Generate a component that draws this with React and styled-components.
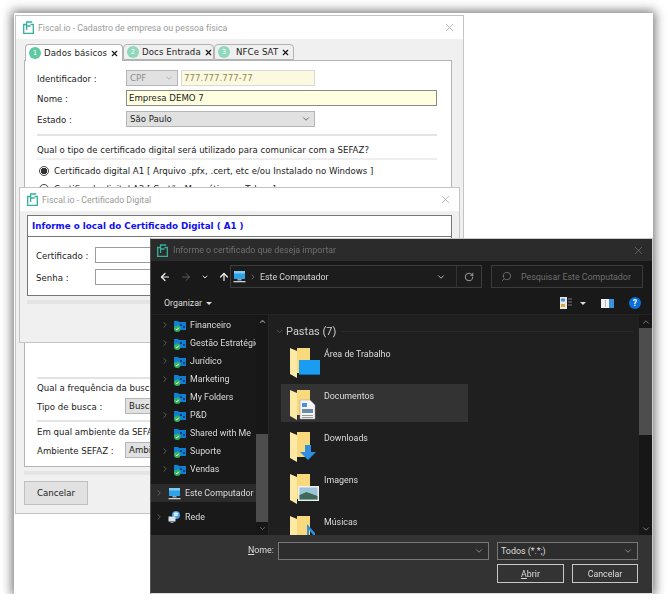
import React from "react"
import styled, { createGlobalStyle } from "styled-components"
import {
  ArrowLeft,
  ArrowRight,
  ArrowUp,
  ChevronDown,
  ChevronRight,
  ChevronUp,
  RotateCw,
  Search,
  X,
} from "lucide-react"

const GlobalStyle = createGlobalStyle`
  html, body {
    margin: 0;
    background: #fff;
  }
  * {
    box-sizing: border-box;
  }
`

const Stage = styled.div`
  position: relative;
  width: 639px;
  height: 581px;
  margin: 13px 0 0 14px;
  background: #fff;
  box-shadow: 0 0 10px 2px rgba(0, 0, 0, 0.55);
  filter: blur(0.3px);
`

/* ---- light windows ---- */

const LightWindow = styled.section`
  position: absolute;
  left: ${p => p.$left}px;
  top: ${p => p.$top}px;
  width: ${p => p.$width}px;
  height: ${p => p.$height}px;
  display: flex;
  flex-direction: column;
  background: #f0f0f0;
  border: 1px solid #c4c4c4;
  font-family: "DejaVu Sans", Verdana, sans-serif;
  font-size: 8.6px;
  color: #222;
`

const TitleBar = styled.header`
  flex: none;
  height: ${p => p.$height}px;
  display: flex;
  align-items: center;
  gap: 4px;
  padding: 0 7px;
  background: #fff;
  color: #9a9a9a;
  font-family: Roboto, sans-serif;
  font-size: 8.8px;
`

const TitleText = styled.span`
  flex: 1;
`

const TabRow = styled.div`
  flex: none;
  display: flex;
  align-items: flex-end;
  height: 20px;
  margin-top: 1px;
  padding-left: 9px;
`

const Tab = styled.div`
  width: ${p => p.$width}px;
  height: ${p => (p.$active ? 17 : 16)}px;
  display: flex;
  align-items: center;
  gap: 3px;
  padding: 0 3px;
  background: ${p => (p.$active ? "#fff" : "#efefef")};
  border: 1px solid #b3b3b3;
  border-bottom: ${p => (p.$active ? "none" : "1px solid #b3b3b3")};
  border-radius: 4px 4px 0 0;
  margin-bottom: ${p => (p.$active ? "-1px" : "0")};
  z-index: ${p => (p.$active ? 1 : 0)};
  letter-spacing: 0.1px;
`

const TabNumber = styled.span`
  flex: none;
  width: 12px;
  height: 12px;
  border-radius: 50%;
  background: ${p => (p.$active ? "#5ec8a0" : "#8ed8bb")};
  color: #fff;
  font-size: 7px;
  line-height: 12px;
  text-align: center;
`

const TabLabel = styled.span`
  flex: 1;
  white-space: nowrap;
  padding-left: ${p => p.$pad ?? 0}px;
`

const TabClose = styled(X)`
  flex: none;
  margin-right: 1px;
  color: #111;
`

const Panel = styled.div`
  flex: none;
  margin: 0 11px 0 8px;
  height: 407px;
  padding: 9px 14px 0 12px;
  display: flex;
  flex-direction: column;
  background: #fff;
  border: 1px solid #b3b3b3;
`

const FormRow = styled.div`
  display: flex;
  align-items: center;
  height: 16px;
  margin-bottom: ${p => p.$gap ?? 4}px;
  gap: 3px;
`

const FieldLabel = styled.label`
  flex: none;
  width: ${p => p.$width ?? 86}px;
  padding-top: 1px;
  white-space: nowrap;
`

const Select = styled.div`
  flex: none;
  width: ${p => p.$width}px;
  height: 16px;
  display: flex;
  align-items: center;
  justify-content: space-between;
  padding: 0 3px;
  background: #e1e1e1;
  border: 1px solid #b5b5b5;
  color: ${p => (p.$muted ? "#8c8c8c" : "#222")};
  white-space: nowrap;
  overflow: hidden;
`

const TextBox = styled.div`
  flex: none;
  width: ${p => p.$width}px;
  height: 16px;
  display: flex;
  align-items: center;
  padding: 0 2px;
  background: ${p => (p.$muted ? "#fbf9df" : "#ffffe0")};
  border: 1px solid ${p => (p.$muted ? "#d8d8d8" : "#8a8a8a")};
  color: ${p => (p.$muted ? "#948a55" : "#222")};
`

const Divider = styled.hr`
  flex: none;
  width: 100%;
  height: 2px;
  margin: ${p => p.$top ?? 0}px 0 ${p => p.$bottom ?? 0}px;
  border: none;
  background: ${p => p.$color ?? "#e3e3e3"};
`

const Line = styled.p`
  margin: 0;
  height: 12px;
  line-height: 13px;
  white-space: nowrap;
`

const RadioRow = styled.div`
  display: flex;
  align-items: center;
  gap: 5px;
  height: 12px;
  margin: 0 0 6px 2px;
  white-space: nowrap;
`

const Radio = styled.span`
  flex: none;
  width: 10px;
  height: 10px;
  border-radius: 50%;
  border: 1px solid #444;
  background: ${p => (p.$on ? "radial-gradient(circle, #333 0 3px, #fff 3.5px)" : "#fff")};
`

const Gap = styled.div`
  flex: none;
  height: ${p => p.$height}px;
`

const Strip = styled.div`
  flex: none;
  height: 4px;
  margin: ${p => p.$margin};
  background: #e4e4e4;
`

const CancelButton = styled.button`
  align-self: flex-start;
  width: 64px;
  height: 24px;
  margin: 6px 0 0 8px;
  padding: 0;
  background: #e1e1e1;
  border: 1px solid #c0c0c0;
  color: #222;
  font: inherit;
`

const CertBox = styled.div`
  height: 81px;
  margin: 4px 7px 0 7px;
  background: #fff;
  border: 1px solid #777;
`

const CertHeading = styled.h2`
  margin: 0;
  height: 21px;
  padding-left: 4px;
  line-height: 20px;
  border-bottom: 1px solid #777;
  color: #1010ee;
  font-size: 8.75px;
  font-weight: 700;
`

const CertFields = styled.div`
  display: flex;
  flex-direction: column;
  gap: 6px;
  padding: 10px 0 0 8px;
`

const CertRow = styled.div`
  display: flex;
  align-items: center;
`

const CertInput = styled.div`
  width: 300px;
  height: 16px;
  background: #fff;
  border: 1px solid #9c9c9c;
`

/* ---- dark file dialog ---- */

const DarkWindow = styled.section`
  position: absolute;
  left: 136px;
  top: 225px;
  width: 503px;
  height: 356px;
  display: flex;
  flex-direction: column;
  background: #1f1f1f;
  border: 1px solid #c9c9c9;
  border-left-color: #555;
  border-bottom-color: #ddd;
  font-family: Roboto, sans-serif;
  font-size: 8.85px;
  color: #dcdcdc;
`

const DarkTitle = styled.header`
  flex: none;
  height: 22px;
  display: flex;
  align-items: center;
  gap: 5px;
  padding: 0 7px 0 6px;
  background: #2b2b2b;
  color: #6f6f6f;
`

const NavBar = styled.div`
  flex: none;
  height: 31px;
  display: flex;
  align-items: center;
  padding: 0 10px 0 4px;
  background: #191919;
`

const NavButtons = styled.div`
  flex: none;
  width: 75px;
  display: flex;
  align-items: center;
  gap: 9px;
  padding-left: 4px;
`

const AddressBox = styled.div`
  flex: none;
  width: 252px;
  height: 23px;
  display: flex;
  align-items: center;
  gap: 3px;
  padding: 0 0 0 2px;
  background: #1c1c1c;
  border: 1px solid #3c3c3c;
  svg {
    flex: none;
  }
`

const AddressText = styled.span`
  flex: 1;
  color: #d4d4d4;
`

const AddressAction = styled.span`
  flex: none;
  display: flex;
  align-items: center;
  justify-content: center;
  width: 25px;
  height: 100%;
  border-left: ${p => (p.$divided ? "1px solid #333" : "none")};
  color: #b4b4b4;
`

const SearchBox = styled.div`
  flex: none;
  width: 152px;
  height: 23px;
  margin-left: 9px;
  display: flex;
  align-items: center;
  gap: 9px;
  padding-left: 9px;
  background: #1c1c1c;
  border: 1px solid #3c3c3c;
  color: #6e6e6e;
  white-space: nowrap;
`

const SearchIcon = styled(Search)`
  flex: none;
  transform: scaleX(-1);
`

const Toolbar = styled.div`
  flex: none;
  height: 23px;
  display: flex;
  align-items: center;
  padding: 0 11px 0 13px;
  background: #191919;
  border-bottom: 1px solid #232323;
`

const ToolbarLabel = styled.span`
  flex: 1;
  display: flex;
  align-items: center;
  gap: 4px;
`

const Caret = styled.span`
  width: 0;
  height: 0;
  border: 3px solid transparent;
  border-top: 3px solid #ddd;
  border-bottom: none;
`

const ToolIcons = styled.span`
  display: flex;
  align-items: center;
  gap: ${p => p.$gap}px;
`

const HelpIcon = styled.span`
  width: 12px;
  height: 12px;
  border-radius: 50%;
  background: #0a6fd8;
  color: #fff;
  font-size: 9px;
  font-weight: 700;
  line-height: 12px;
  text-align: center;
`

const Browser = styled.div`
  flex: 1;
  min-height: 0;
  display: flex;
`

const Sidebar = styled.nav`
  flex: none;
  width: 118px;
  display: flex;
  background: #191919;
  border-right: 1px solid #262626;
`

const TreeList = styled.ul`
  flex: 1;
  min-width: 0;
  margin: 0;
  padding: 1px 0 0;
  list-style: none;
  overflow: hidden;
`

const TreeItem = styled.li`
  height: 18px;
  display: flex;
  align-items: center;
  gap: 4px;
  padding-left: ${p => p.$indent}px;
  margin-top: ${p => p.$top ?? 0}px;
  background: ${p => (p.$selected ? "#2b2b2b" : "transparent")};
  white-space: nowrap;
  svg {
    flex: none;
  }
`

const TreeArrow = styled(ChevronRight)`
  color: #666;
  visibility: ${p => (p.$hidden ? "hidden" : "visible")};
`

const ScrollBar = styled.div`
  flex: none;
  width: ${p => p.$width}px;
  display: flex;
  flex-direction: column;
  align-items: center;
  background: #171717;
  color: #7a7a7a;
`

const ScrollStep = styled.span`
  flex: none;
  height: 13px;
  display: flex;
  align-items: center;
`

const ScrollTrack = styled.div`
  flex: 1;
  width: 100%;
  min-height: 0;
  display: flex;
  flex-direction: column;
  justify-content: ${p => p.$align};
`

const ScrollThumb = styled.div`
  height: ${p => p.$height}px;
  background: #4d4d4d;
`

const Content = styled.main`
  flex: 1;
  min-width: 0;
  padding: 6px 0 0 6px;
  overflow: hidden;
`

const GroupHeader = styled.div`
  display: flex;
  align-items: center;
  height: 20px;
  gap: 2px;
  padding-right: 6px;
  color: #cfcfcf;
  font-size: 11px;
`

const GroupLine = styled.span`
  flex: 1;
  height: 1px;
  margin-left: 4px;
  background: #2b2b2b;
`

const FolderRow = styled.div`
  width: 187px;
  height: 38px;
  margin: 0 0 4px 6px;
  display: flex;
  gap: 3px;
  padding: 5px 0 0 8px;
  background: ${p => (p.$selected ? "#333" : "transparent")};
  svg {
    flex: none;
  }
`

const FolderName = styled.span`
  line-height: 15px;
`

const BottomPane = styled.footer`
  flex: none;
  height: 58px;
  display: grid;
  grid-template-columns: 211px 141px;
  grid-template-rows: 18px 19px;
  grid-column-gap: 8px;
  grid-row-gap: 4px;
  align-content: start;
  justify-content: end;
  position: relative;
  padding: 7px 14px 0 0;
  background: #333;
`

const NameLabel = styled.span`
  position: absolute;
  left: 97px;
  top: 10px;
  u {
    text-underline-offset: 1px;
  }
`

const DarkSelect = styled.div`
  display: flex;
  align-items: center;
  justify-content: space-between;
  padding: 0 4px 0 3px;
  background: #2d2d2d;
  border: 1px solid #777;
  color: #dcdcdc;
`

const DialogButtons = styled.div`
  grid-column: 2;
  display: flex;
  justify-content: space-between;
`

const DialogButton = styled.button`
  width: ${p => p.$width}px;
  height: 19px;
  padding: 0;
  background: #333;
  border: 1px solid #c8c8c8;
  color: #dcdcdc;
  font: inherit;
`

/* ---- drawings ---- */

const Logo = () => (
  <svg width="11" height="13" viewBox="0 0 11 13" fill="none" stroke="#34b09a" strokeWidth="1.3">
    <path d="M3.5 3.5H.7v8.8h9.6V3.5H7.5" />
    <path d="M3.6 9V1h5.6M3.6 5h4" />
  </svg>
)

const FolderBack = () => (
  <>
    <path d="M8 1h13v25H8z" fill="#f9d97e" />
    <path d="M1 1l7 3v27l-7-4z" fill="#fde9a6" />
  </>
)

const FolderBadge = ({ kind }) => {
  if (kind === "desktop")
    return (
      <>
        <rect x="10" y="13" width="21" height="15" fill="#1a9cf0" />
        <path d="M10 27h21v1H10z" fill="#0d6fb8" />
      </>
    )
  if (kind === "docs")
    return (
      <>
        <path d="M11 11h10l5 5v14H11z" fill="#f5f5f5" stroke="#999" strokeWidth=".5" />
        <path d="M13 20h11v4H13z" fill="#6a8ca5" />
        <path d="M13 14h5v4h-5z" fill="#4a90d9" />
        <path d="M13 26h11v1H13zM13 28h11v1H13z" fill="#999" />
      </>
    )
  if (kind === "down") return <path d="M16 14h6v7h5l-8 8-8-8h5z" fill="#2f8fe0" />
  if (kind === "image")
    return (
      <>
        <rect x="9" y="13" width="21" height="15" fill="#eee" />
        <rect x="10.5" y="14.5" width="18" height="12" fill="#9cc4d8" />
        <path d="M10.5 22l7-3 11 4v3.5h-18z" fill="#3f6a5a" />
      </>
    )
  return <path d="M20 13v14a3 3 0 1 1-2-2.5V9l8 9v4l-6-7z" fill="#2f8fe0" />
}

const BigFolder = ({ kind }) => (
  <svg width="32" height="32" viewBox="0 0 32 32">
    <FolderBack />
    <FolderBadge kind={kind} />
  </svg>
)

const SyncFolder = () => (
  <svg width="12" height="13" viewBox="0 0 12 13">
    <path d="M0 2h4l1 1h7v8H0z" fill="#0f7fd6" />
    <path d="M6 5h2v2H6zM9 7h2v2H9z" fill="#0b3f6e" />
    <circle cx="3.2" cy="9.7" r="3.2" fill="#31b060" />
    <path d="M1.7 9.8l1.1 1.1 2-2.2" stroke="#fff" strokeWidth="1" fill="none" />
  </svg>
)

const Monitor = () => (
  <svg width="13" height="13" viewBox="0 0 13 13">
    <rect x="1" y="1" width="11" height="8" fill="#2ea3ea" />
    <rect x="1" y="1" width="11" height="2.5" fill="#7fcdf6" />
    <path d="M4.5 9h4v1.5h-4z" fill="#9aa8b0" />
    <path d="M0.5 11h12v1.3H.5z" fill="#c9d0d4" />
  </svg>
)

const Globe = () => (
  <svg width="13" height="14" viewBox="0 0 13 14">
    <circle cx="8" cy="5" r="4" fill="#4a9fe0" />
    <path d="M5.5 3c1.5-1 3-1 5 0l-1 3H6z" fill="#cfeafc" />
    <rect x="0.5" y="6.5" width="7" height="5" fill="#d7e4ec" />
    <path d="M2.5 12h3v1h-3z" fill="#8a9aa5" />
  </svg>
)

const ViewIcon = () => (
  <svg width="12" height="12" viewBox="0 0 12 12">
    <rect x="0" y="0" width="7" height="12" fill="#e8e8e8" />
    <rect x="1" y="1.5" width="4" height="3" fill="#4a90d9" />
    <rect x="1" y="7" width="4" height="3" fill="#d8a93a" />
    <path d="M8 2h4M8 5h4M8 8h4" stroke="#777" />
  </svg>
)

const PaneIcon = () => (
  <svg width="13" height="9" viewBox="0 0 13 9">
    <rect width="13" height="9" fill="#f2f2f2" />
    <rect x="8" y="0" width="5" height="9" fill="#3d92dd" />
    <rect x="4" y="1" width="1" height="7" fill="#bbb" />
  </svg>
)

const treeItems = [
  ["Financeiro", true],
  ["Gestão Estratégica", true],
  ["Jurídico", true],
  ["Marketing", true],
  ["My Folders", false],
  ["P&D", true],
  ["Shared with Me", false],
  ["Suporte", true],
  ["Vendas", true],
]

const folders = [
  ["Área de Trabalho", "desktop"],
  ["Documentos", "docs"],
  ["Downloads", "down"],
  ["Imagens", "image"],
  ["Músicas", "music"],
]

const App = () => (
  <Stage>
    <GlobalStyle />

    <LightWindow $left={1} $top={2} $width={449} $height={499}>
      <TitleBar $height={23}>
        <Logo />
        <TitleText>Fiscal.io - Cadastro de empresa ou pessoa física</TitleText>
        <X size={13} strokeWidth={1} color="#888" />
      </TitleBar>
      <TabRow>
        <Tab $active $width={98}>
          <TabNumber $active>1</TabNumber>
          <TabLabel>Dados básicos</TabLabel>
          <TabClose size={9} strokeWidth={3} />
        </Tab>
        <Tab $width={91}>
          <TabNumber>2</TabNumber>
          <TabLabel>Docs Entrada</TabLabel>
          <TabClose size={9} strokeWidth={3} />
        </Tab>
        <Tab $width={80}>
          <TabNumber>3</TabNumber>
          <TabLabel $pad={3}>NFCe SAT</TabLabel>
          <TabClose size={9} strokeWidth={3} />
        </Tab>
      </TabRow>
      <Panel>
        <FormRow>
          <FieldLabel>Identificador :</FieldLabel>
          <Select $width={52} $muted>
            CPF
            <ChevronDown size={10} color="#aaa" />
          </Select>
          <TextBox $width={134} $muted>777.777.777-77</TextBox>
        </FormRow>
        <FormRow $gap={5}>
          <FieldLabel>Nome :</FieldLabel>
          <TextBox $width={311}>Empresa DEMO 7</TextBox>
        </FormRow>
        <FormRow $gap={7}>
          <FieldLabel>Estado :</FieldLabel>
          <Select $width={189}>
            São Paulo
            <ChevronDown size={10} color="#555" />
          </Select>
        </FormRow>
        <Divider $bottom={8} />
        <Line>Qual o tipo de certificado digital será utilizado para comunicar com a SEFAZ?</Line>
        <Divider $top={2} $bottom={5} $color="#eee" />
        <RadioRow>
          <Radio $on />
          Certificado digital A1 [ Arquivo .pfx, .cert, etc e/ou Instalado no Windows ]
        </RadioRow>
        <RadioRow>
          <Radio />
          Certificado digital A3 [ Cartão Magnético ou Token ]
        </RadioRow>
        <Gap $height={176} />
        <Divider $bottom={3} />
        <Line>Qual a frequência da busca de documentos?</Line>
        <Gap $height={4} />
        <FormRow $gap={6}>
          <FieldLabel $width={85}>Tipo de busca :</FieldLabel>
          <Select $width={200}>Busca automática</Select>
        </FormRow>
        <Divider $bottom={4} />
        <Line>Em qual ambiente da SEFAZ?</Line>
        <Gap $height={4} />
        <FormRow>
          <FieldLabel $width={85}>Ambiente SEFAZ :</FieldLabel>
          <Select $width={200}>Ambiente de Produção</Select>
        </FormRow>
      </Panel>
      <Strip $margin="4px 11px 0 8px" />
      <CancelButton>Cancelar</CancelButton>
    </LightWindow>

    <LightWindow $left={5} $top={174} $width={441} $height={156}>
      <TitleBar $height={23}>
        <Logo />
        <TitleText>Fiscal.io - Certificado Digital</TitleText>
        <X size={13} strokeWidth={1} color="#888" />
      </TitleBar>
      <CertBox>
        <CertHeading>Informe o local do Certificado Digital ( A1 )</CertHeading>
        <CertFields>
          <CertRow>
            <FieldLabel $width={59}>Certificado :</FieldLabel>
            <CertInput />
          </CertRow>
          <CertRow>
            <FieldLabel $width={59}>Senha :</FieldLabel>
            <CertInput />
          </CertRow>
        </CertFields>
      </CertBox>
      <Strip $margin="4px 7px 0 7px" />
    </LightWindow>

    <DarkWindow>
      <DarkTitle>
        <Logo />
        <TitleText>Informe o certificado que deseja importar</TitleText>
        <X size={13} strokeWidth={1} color="#8a8a8a" />
      </DarkTitle>
      <NavBar>
        <NavButtons>
          <ArrowLeft size={12} strokeWidth={2.4} color="#f2f2f2" />
          <ArrowRight size={12} strokeWidth={1.6} color="#6d6d6d" />
          <ChevronDown size={8} strokeWidth={3} color="#ddd" />
          <ArrowUp size={12} strokeWidth={2.4} color="#f2f2f2" />
        </NavButtons>
        <AddressBox>
          <Monitor />
          <ChevronRight size={8} color="#888" />
          <AddressText>Este Computador</AddressText>
          <AddressAction>
            <ChevronDown size={10} strokeWidth={2.4} />
          </AddressAction>
          <AddressAction $divided>
            <RotateCw size={10} strokeWidth={2} />
          </AddressAction>
        </AddressBox>
        <SearchBox>
          <SearchIcon size={11} />
          Pesquisar Este Computador
        </SearchBox>
      </NavBar>
      <Toolbar>
        <ToolbarLabel>
          Organizar
          <Caret />
        </ToolbarLabel>
        <ToolIcons $gap={15}>
          <ToolIcons $gap={8}>
            <ViewIcon />
            <Caret />
          </ToolIcons>
          <PaneIcon />
          <HelpIcon>?</HelpIcon>
        </ToolIcons>
      </Toolbar>
      <Browser>
        <Sidebar>
          <TreeList>
            {treeItems.map(([name, expandable]) => (
              <TreeItem key={name} $indent={9}>
                <TreeArrow size={10} $hidden={!expandable} />
                <SyncFolder />
                {name}
              </TreeItem>
            ))}
            <TreeItem $indent={3} $top={6} $selected>
              <TreeArrow size={10} />
              <Monitor />
              Este Computador
            </TreeItem>
            <TreeItem $indent={3} $top={6}>
              <TreeArrow size={10} />
              <Globe />
              Rede
            </TreeItem>
          </TreeList>
          <ScrollBar $width={12}>
            <ScrollStep>
              <ChevronUp size={9} strokeWidth={3} />
            </ScrollStep>
            <ScrollTrack $align="flex-end">
              <ScrollThumb $height={88} />
            </ScrollTrack>
            <ScrollStep>
              <ChevronDown size={9} strokeWidth={2} />
            </ScrollStep>
          </ScrollBar>
        </Sidebar>
        <Content>
          <GroupHeader>
            <ChevronDown size={9} color="#666" />
            Pastas (7)
            <GroupLine />
          </GroupHeader>
          <Gap $height={1} />
          {folders.map(([name, kind]) => (
            <FolderRow key={name} $selected={kind === "docs"}>
              <BigFolder kind={kind} />
              <FolderName>{name}</FolderName>
            </FolderRow>
          ))}
        </Content>
        <ScrollBar $width={13}>
          <ScrollStep>
            <ChevronUp size={10} strokeWidth={2.4} />
          </ScrollStep>
          <ScrollTrack $align="flex-start">
            <ScrollThumb $height={107} />
          </ScrollTrack>
          <ScrollStep>
            <ChevronDown size={10} strokeWidth={2.4} />
          </ScrollStep>
        </ScrollBar>
      </Browser>
      <BottomPane>
        <NameLabel>
          <u>N</u>ome:
        </NameLabel>
        <DarkSelect>
          <span />
          <ChevronDown size={10} color="#999" />
        </DarkSelect>
        <DarkSelect>
          Todos (*.*;)
          <ChevronDown size={10} color="#999" />
        </DarkSelect>
        <DialogButtons>
          <DialogButton $width={67}>
            <u>A</u>brir
          </DialogButton>
          <DialogButton $width={66}>Cancelar</DialogButton>
        </DialogButtons>
      </BottomPane>
    </DarkWindow>
  </Stage>
)

export default App
